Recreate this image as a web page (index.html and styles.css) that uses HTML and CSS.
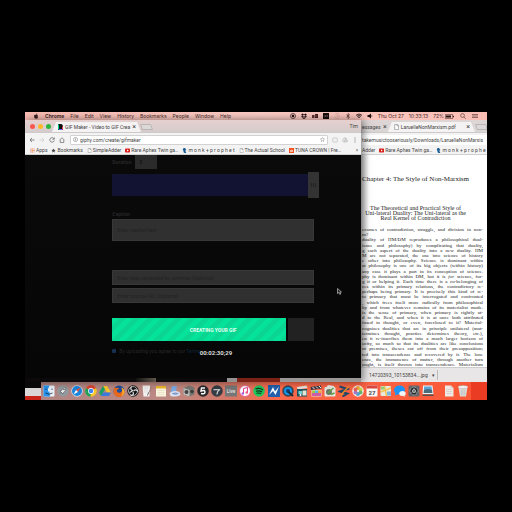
FILE: index.html
```html
<!DOCTYPE html>
<html lang="en">
<head>
<meta charset="utf-8">
<title>GIF Maker - Video to GIF Creator</title>
<link rel="stylesheet" href="styles.css">
</head>
<body>
<svg class="defs" aria-hidden="true">
  <symbol id="doc" viewBox="0 0 8 10"><path d="M1 .5h4l2.500 2.500v6.500H1z" fill="#fff" stroke="#777"/><path d="M5 .5V3h2.500" fill="none" stroke="#777"/></symbol>
  <symbol id="play" viewBox="0 0 10 10"><rect y="1" width="10" height="8" rx="1.500" fill="#d8201c"/><path d="M4 3l3.500 2L4 7z" fill="#fff"/></symbol>
  <symbol id="tumblr" viewBox="0 0 8 10"><path d="M2.500 0h2.500v2.500h2v2H5v2.500q0 1 2 .5V10q-4.500.5-4.500-2.500v-3H1v-2q1.500-.5 1.500-2.500z" fill="#1d5f94" stroke="#1d5f94"/></symbol>
  <symbol id="star" viewBox="0 0 12 12"><path d="M6 1l1.500 3.300 3.500.4-2.600 2.400.7 3.600L6 8.900l-3.100 1.800.7-3.600L1 4.700l3.500-.4z"/></symbol>
</svg>
<main class="desktop">
  <header class="menubar">
    <nav class="menus">
      <svg class="ico" viewBox="0 0 12 12"><path d="M8.300.5Q6.200 1 6.300 3 8 2.800 8.300.5M6 3.500Q2.500 2.500 2 6q0 3.500 2.500 5.500l1.500-.5 1.800.5Q9.700 10 10.300 8 7.500 6.500 9.800 4.300 8.500 2.700 6 3.500" fill="#3a2222"/></svg>
      <button type="button" class="app">Chrome</button>
      <button type="button">File</button>
      <button type="button">Edit</button>
      <button type="button">View</button>
      <button type="button">History</button>
      <button type="button">Bookmarks</button>
      <button type="button">People</button>
      <button type="button">Window</button>
      <button type="button">Help</button>
    </nav>
    <div class="status">
      <svg class="ico" viewBox="0 0 12 12"><circle cx="6" cy="6" r="5" fill="none" stroke="#3a2424" stroke-width="1.500"/><circle cx="6" cy="6" r="2.500" fill="#221111"/></svg>
      <svg class="ico" viewBox="0 0 12 12"><path d="M3 1l3 2 3-2 3 2.500-3 2 3 2L9 9.500 6 7.500l-3 2-3-2 3-2-3-2zM6 8.500l3 2-3 1.500-3-1.500z" fill="#221111"/><path d="M6 3.500l3 2-3 2-3-2z" fill="#f9c3bb"/></svg>
      <svg class="ico" viewBox="0 0 12 12"><path d="M0 4h5v6H0zM6 2h6v8H6z" fill="#4a2020"/><path d="M2 5v4M8 4v4" stroke="#c68b86"/></svg>
      <svg class="ico" viewBox="0 0 12 12"><path d="M0 0h12v12H0z" fill="#170d0d"/><path d="M2 8l3-4v4l4-4v4" stroke="#8d6664" fill="none"/></svg>
      <svg class="ico" viewBox="0 0 12 12"><path d="M2 3a5 5 0 1 1-1 4M6 3v4h2" stroke="#dda59e" stroke-width="1.500" fill="none"/></svg>
      <svg class="ico" viewBox="0 0 12 12"><path d="M3 3.500l6 5-3 2.500V1l3 2.500-6 5" stroke="#4a2c2c" stroke-width="1.300" fill="none"/></svg>
      <svg class="ico" viewBox="0 0 12 12"><path d="M0 4.500q6-5 12 0M2 6.800q4-3.500 8 0M4 9q2-2 4 0" stroke="#2c1818" stroke-width="1.800" fill="none"/></svg>
      <svg class="ico" viewBox="0 0 12 12"><path d="M1 4h3l4-3v10L4 8H1z" fill="#221111"/><path d="M9.500 4v4" stroke="#221111"/></svg>
      <time>Thu Oct 27</time>
      <time>10:33:13</time>
      <span class="battery">72%<svg viewBox="0 0 18 10"><rect x=".5" y="1.500" width="15" height="7" fill="none" stroke="#3a2222"/><path d="M2 3h10v4H2z" fill="#221111"/><path d="M17 3.500v3" stroke="#3a2222" stroke-width="2"/></svg></span>
      <svg class="ico far" viewBox="0 0 12 12"><circle cx="5" cy="5" r="3.800" fill="none" stroke="#5a3835" stroke-width="1.300"/><path d="M8 8l3.500 3.500" stroke="#5a3835" stroke-width="1.300"/></svg>
      <svg class="ico far" viewBox="0 0 12 12"><path d="M0 3h12M0 6h12M0 9h12" stroke="#5a3835" stroke-width="1.300"/></svg>
    </div>
  </header>

  <div class="stage">
    <section class="window front">
      <div class="tabstrip">
        <div class="lights"><i class="red"></i><i class="amber"></i><i class="green"></i></div>
        <div class="tab">
          <svg class="fav" viewBox="0 0 10 12"><path d="M0 0h7l3 3v9H0z" fill="#111"/><path d="M1 1v10" stroke="#00d68b" stroke-width="2"/><path d="M2 11h7" stroke="#6157ff" stroke-width="2"/><path d="M9 5v6" stroke="#e44" stroke-width="2"/></svg>
          <span class="title">GIF Maker - Video to GIF Crea</span>
          <button type="button" class="close" aria-label="Close tab">×</button>
        </div>
        <button type="button" class="newtab" aria-label="New tab"></button>
        <span class="user">Tim</span>
      </div>
      <div class="toolbar">
        <svg class="nav" viewBox="0 0 12 12"><path d="M11 6H2M6 2L2 6l4 4" fill="none" stroke="#666" stroke-width="1.500"/></svg>
        <svg class="nav" viewBox="0 0 12 12"><path d="M1 6h9M6 2l4 4-4 4" fill="none" stroke="#ccc" stroke-width="1.500"/></svg>
        <svg class="nav" viewBox="0 0 12 12"><path d="M10 3.500A4.500 4.500 0 1 0 10.500 7M10.500 1v3.500H7" fill="none" stroke="#666" stroke-width="1.500"/></svg>
        <svg class="nav" viewBox="0 0 12 12"><path d="M1 6.500L6 1.500l5 5M2.500 6v5h7V6" fill="none" stroke="#666" stroke-width="1.400"/></svg>
        <div class="omnibox">
          <svg class="info" viewBox="0 0 12 12"><circle cx="6" cy="6" r="5" fill="none" stroke="#777" stroke-width="1.300"/><path d="M6 5v4M6 2.500v1.500" stroke="#777" stroke-width="1.400"/></svg>
          <input type="text" aria-label="Address" value="giphy.com/create/gifmaker">
          <svg class="info line" viewBox="0 0 12 12"><use href="#star"/></svg>
        </div>
        <svg class="nav" viewBox="0 0 12 12"><rect x="1.500" y="2" width="9" height="8" rx="1" fill="none" stroke="#bbb" stroke-width="1.300"/></svg>
        <svg class="nav" viewBox="0 0 12 12"><path d="M4 2h4l3 6-2 2H3L1 8zM4 8h7M8 2L5 8" fill="none" stroke="#aaa" stroke-width="1.200"/></svg>
        <svg class="nav" viewBox="0 0 12 12"><path d="M6 1v2M6 5v2M6 9v2" stroke="#777" stroke-width="2"/></svg>
      </div>
      <nav class="bookmarks">
        <a href="#"><svg viewBox="0 0 10 10"><path d="M1 1h2v2H1zM1 7h2v2H1zM7 4h2v2H7z" fill="#e2574a"/><path d="M4 1h2v2H4zM4 4h2v2H4zM7 7h2v2H7z" fill="#f2a53c"/><path d="M7 1h2v2H7zM1 4h2v2H1zM4 7h2v2H4z" fill="#e9766a"/></svg>Apps</a>
        <a href="#"><svg class="solid" viewBox="0 0 12 12"><use href="#star"/></svg>Bookmarks</a>
        <a href="#"><svg viewBox="0 0 8 10"><use href="#doc"/></svg>SimpleAdder</a>
        <a href="#"><svg viewBox="0 0 10 10"><use href="#play"/></svg>Rare Aphex Twin ga…</a>
        <a href="#"><svg viewBox="0 0 8 10"><use href="#tumblr"/></svg>m o n k + p r o p h e t</a>
        <a href="#"><svg viewBox="0 0 8 10"><use href="#doc"/></svg>The Actual School</a>
        <a href="#"><svg viewBox="0 0 10 10"><path d="M0 0h10v10H0z" fill="#f4511e"/><path d="M2 6h6M3 4v4M5 3v5M7 4v4" stroke="#fff"/></svg>TUNA CROWN | Fre…</a>
        <span class="more">»</span>
      </nav>
      <form class="maker">
        <div class="row duration"><label for="dur">Duration</label><input id="dur" type="text" value="2"></div>
        <div class="track"><span class="grip"></span></div>
        <label class="cap" for="caption">Caption</label>
        <input id="caption" class="field tall" type="text" placeholder="Enter caption text">
        <input class="field" type="text" aria-label="Tags" placeholder="Enter tags separated by commas (Optional)">
        <input class="field" type="text" aria-label="Source" placeholder="Enter source URL (Optional)">
        <button type="button" class="create">CREATING YOUR GIF</button>
        <div class="row agree"><input id="ok" type="checkbox" checked><label for="ok">By uploading you agree to our <a href="#">Terms</a></label></div>
        <output class="timecode">00:02:30;29</output>
      </form>
      <svg class="cursor" viewBox="0 0 10 14"><path d="M1 1v10l2.500-2 2 4 2-1-2-4H9z" fill="#222" stroke="#ccc" stroke-width="1.300"/></svg>
      <div class="peek"><i class="photo"></i><i class="gray"></i><i class="rust"></i><i class="pale"></i></div>
    </section>

    <section class="window back">
      <div class="tabstrip">
        <span class="oldtab">essages</span>
        <button type="button" class="close" aria-label="Close tab">×</button>
        <div class="tab">
          <svg class="fav" viewBox="0 0 8 10"><use href="#doc"/></svg>
          <span class="title">LaruelleNonMarxism.pdf</span>
          <button type="button" class="close" aria-label="Close tab">×</button>
        </div>
        <button type="button" class="newtab" aria-label="New tab"></button>
      </div>
      <div class="toolbar"><input type="text" aria-label="Address" value="takemusictooseriously/Downloads/LaruelleNonMarxis"></div>
      <nav class="bookmarks">
        <a href="#">Adder</a>
        <a href="#"><svg viewBox="0 0 10 10"><use href="#play"/></svg>Rare Aphex Twin ga…</a>
        <a href="#"><svg viewBox="0 0 8 10"><use href="#tumblr"/></svg>m o n k + p r o p h e</a>
      </nav>
      <article class="paper">
        <h1>Chapter 4: The Style of Non-Marxism</h1>
        <h2>The Theoretical and Practical Style of<br>Uni-lateral Duality: The Uni-lateral as the<br>Real Kernel of Contradiction</h2>
        <div class="lines">
          <p>ecomes of contradiction, struggle, and division in non-</p>
          <p class="end">m?</p>
          <p>duality of HM/DM reproduces a philosophical dual-</p>
          <p>ience and philosophy) by complicating that duality,</p>
          <p>g each aspect of the duality into a new duality. HM</p>
          <p>M are not separated, the one into science of history</p>
          <p>e other into philosophy. Science is dominant within</p>
          <p>at philosophy is one of its big objects (within history)</p>
          <p>any case it plays a part in its conception of science.</p>
          <p>phy is dominant within DM, but it is <em>for</em> science, fur-</p>
          <p>g it or helping it. Each time there is a co-belonging of</p>
          <p>ces within its primary relations, the contradictory re-</p>
          <p>perhaps being primary. It is precisely this kind of re-</p>
          <p>to primacy that must be interrogated and confronted</p>
          <p>, which frees itself more radically from philosophical</p>
          <p>hy and from whatever remains of its materialist mode.</p>
          <p>is the sense of primacy, when primacy is rightly at-</p>
          <p>d to the Real, and when it is at once both attributed</p>
          <p>fused to thought, or even, foreclosed to it? Material-</p>
          <p>cognizes dualities that are in principle unilateral (mat-</p>
          <p>termines thought, practice determines theory, etc.),</p>
          <p>en it re-inscribes them into a much larger horizon of</p>
          <p>ocity, so much so that its dualities are like conclusions</p>
          <p>ut premises, theses cut off from their presupposition;</p>
          <p>ted into transcendence and recovered by it. The lone</p>
          <p>ence, the immanence of matter, through another turn</p>
          <p>ought, is itself thrown into transcendence. Materialism</p>
        </div>
      </article>
      <footer class="downloads"><button type="button">14720393_10153834….jpg<i>▾</i></button></footer>
    </section>
  </div>

  <footer class="shelf">
    <nav class="dock">
      <svg viewBox="0 0 24 24"><rect x="1" y="1" width="22" height="22" rx="2" fill="#e9f0f8"/><path d="M1 1h12q-4 7-3 12h3q0 6 1 10H1z" fill="#2794ee"/><path d="M6 7v3M18 7v3M5 16q7 5 14 0" stroke="#123" stroke-width="1.500" fill="none"/></svg>
      <svg viewBox="0 0 24 24"><circle cx="12" cy="12" r="11.500" fill="#939a9f"/><path d="M18 5q-6 0-9 6l-3 1 6 6 1-3q5-3 5-10M6 17l3-3" fill="#e8ebec" stroke="#444"/><circle cx="14" cy="9" r="1.500" fill="#555"/></svg>
      <svg viewBox="0 0 24 24"><circle cx="12" cy="12" r="11.500" fill="#d5e3ef"/><circle cx="12" cy="12" r="10" fill="#1b85dc"/><path d="M19 5l-5 9-4-4z" fill="#f04b3a"/><path d="M5 19l5-9 4 4z" fill="#fff"/></svg>
      <svg viewBox="0 0 24 24"><circle cx="12" cy="12" r="11.500" fill="#f6c727"/><path d="M12 12L2 6a11.500 11.500 0 0 1 20 0z" fill="#dc4437"/><path d="M12 12L2 6a11.500 11.500 0 0 0 9 17.500z" fill="#1fa15b"/><circle cx="12" cy="12" r="5.800" fill="#fff"/><circle cx="12" cy="12" r="4.500" fill="#4285f4"/></svg>
      <svg viewBox="0 0 24 24"><path d="M8 2h8l8 13h-8z" fill="#f9c52c"/><path d="M8 2l4 7-8 13-4-7z" fill="#1da362"/><path d="M8 15h16l-4 7H4z" fill="#3d78dc"/></svg>
      <svg viewBox="0 0 24 24"><circle cx="12" cy="12" r="11" fill="#1d4f9e"/><path d="M3 4q2 2 4 2 4-2 5 2-6 1-4 5 2 4 7 2 5-3 2-10 7 4 6 10-2 9-11 9T1 14Q1 7 3 4" fill="#e8691c"/><path d="M17 5q6 3 6 9-1 6-7 8 5-5 1-17" fill="#f8b02d"/></svg>
      <svg viewBox="0 0 24 24"><circle cx="12" cy="12" r="11.500" fill="#151518"/><circle cx="12" cy="12" r="9" fill="none" stroke="#ddd" stroke-width="1.500"/><path d="M12 11Q5 10 9 3M13 12q5-5 9 1M12 14q3 7-5 7M11 12l-6 3" fill="none" stroke="#ddd" stroke-width="2.500"/></svg>
      <svg viewBox="0 0 24 24"><path d="M3 1h15l-1 22H5z" fill="#f3f2f0"/><path d="M6 6h8M6 10h8M6 14h7" stroke="#ccc"/><path d="M22 3l-8 17-2 2 1-4z" fill="#555"/></svg>
      <svg viewBox="0 0 24 24"><rect x="2" y="2" width="20" height="21" rx="1" fill="#fbf6df"/><path d="M2 2h20v5H2z" fill="#efb92f"/><path d="M5 11h14M5 15h14M5 19h14" stroke="#ddd4b8"/></svg>
      <svg viewBox="0 0 24 24"><path d="M7 1l9 2-3 13-10-3z" fill="#7caae3"/><path d="M1 16q9-7 20-2l2 6q-10 5-20 2z" fill="#dbe3ef"/><path d="M5 17q8-4 15 0-7 5-15 0" fill="#819bd0"/></svg>
      <svg viewBox="0 0 24 24"><path d="M1 6l11-5 11 4v14l-10 4-12-4z" fill="#777873"/><path d="M1 6l12 4v13L1 19z" fill="#bcbdb8"/><circle cx="7" cy="14" r="4" fill="#444"/><circle cx="18" cy="13" r="3.500" fill="#3d3d3b"/></svg>
      <svg viewBox="0 0 24 24"><circle cx="12" cy="12" r="11.500" fill="#29282a"/><path d="M16 6H9l-1 6q8-3 8 2 0 5-8 3" fill="none" stroke="#fff" stroke-width="2.800"/></svg>
      <svg viewBox="0 0 24 24"><circle cx="12" cy="12" r="11.500" fill="#353c43"/><path d="M5 9h13q-6 3-6 10" fill="none" stroke="#c3c8cd" stroke-width="2.500"/></svg>
      <svg viewBox="0 0 24 24"><path d="M0 1h24v22H0z" fill="#777"/><text x="12" y="15" class="live">Live</text></svg>
      <svg viewBox="0 0 24 24"><circle cx="12" cy="12" r="11.500" fill="#ed6eb2"/><circle cx="12" cy="12" r="10" fill="#fff"/><path d="M9 17V7l8-2v10" fill="none" stroke="#e9438d" stroke-width="2"/><circle cx="7.500" cy="17" r="2.500" fill="#a25be4"/><circle cx="15.500" cy="15" r="2.500" fill="#ef5180"/></svg>
      <svg viewBox="0 0 24 24"><circle cx="12" cy="12" r="11.500" fill="#1fc75c"/><path d="M5 8q8-3 15 2M6 12.500q7-2 12 1.500M7 16.500q6-1.500 9 1" fill="none" stroke="#14331f" stroke-width="2.300"/></svg>
      <svg viewBox="0 0 24 24"><path d="M0 0h24v24H0z" fill="#225fac"/><path d="M2 20L10 4l4 9 8-10-7 17-5-8z" fill="#fff"/></svg>
      <svg viewBox="0 0 24 24"><circle cx="12" cy="12" r="11.500" fill="#3b4654"/><circle cx="12" cy="12" r="8" fill="#1497e8"/><circle cx="12" cy="12" r="4" fill="#123f75"/><path d="M13 14l9 8" stroke="#1b2939" stroke-width="4"/></svg>
      <svg viewBox="0 0 24 24"><path d="M2 4l19-3 2 5L3 9z" fill="#e7e5dd"/><path d="M2 8h20v15H2z" fill="#24505b"/><path d="M5 12h7v6H5z" fill="#72d5d4"/><path d="M13 11h8v10h-8z" fill="#e4e6d4"/><circle cx="9" cy="20" r="2" fill="#fff"/></svg>
      <svg viewBox="0 0 24 24"><path d="M1 4l21-3 1 6-21 3z" fill="#3b3a42"/><path d="M5 4l4 4M12 3l4 4M18 2l4 4" stroke="#fff" stroke-width="2"/><path d="M3 10h20v13H3z" fill="#e8e0d7"/><path d="M4 11h6v5H4z" fill="#a4cb41"/><path d="M10 11h6v5h-6z" fill="#4fb8e2"/><path d="M16 11h6v5h-6z" fill="#f2a33b"/><path d="M4 16h18v6H4z" fill="#cf5ca6"/></svg>
      <svg viewBox="0 0 24 24"><rect x="1" y="4" width="22" height="19" rx="2" fill="#e5e6dd"/><path d="M5 4l3-4 12 2v3z" fill="#eee"/><circle cx="10" cy="14" r="6" fill="#677567"/><path d="M8 16l11-10M14 19l7-3" stroke="#66a24b" stroke-width="3"/></svg>
      <svg viewBox="0 0 24 24"><path d="M3 3l16 5-15 5 15 4-10 6" fill="none" stroke="#20486b" stroke-width="4"/><path d="M22 2L5 21" stroke="#ea8b22" stroke-width="3"/></svg>
      <svg viewBox="0 0 24 24"><circle cx="12" cy="12" r="11.500" fill="#f5f3f0"/><circle cx="12" cy="6" r="4" fill="#f59f33"/><circle cx="17" cy="9" r="4" fill="#c8d24a"/><circle cx="17" cy="15" r="4" fill="#67b46b"/><circle cx="12" cy="18" r="4" fill="#4fa0d0"/><circle cx="7" cy="15" r="4" fill="#a27bc4"/><circle cx="7" cy="9" r="4" fill="#e8615a"/></svg>
      <svg viewBox="0 0 24 24"><rect x="1" y="1" width="22" height="22" rx="2" fill="#fbf8f6"/><path d="M1 1h22v6H1z" fill="#d8463d"/><text x="12" y="19" class="day">27</text></svg>
      <svg viewBox="0 0 24 24"><rect x="1" y="2" width="21" height="20" rx="2" fill="#e9e8da"/><path d="M1 14L22 6M9 2l4 20" stroke="#f2c44f" stroke-width="3"/><path d="M2 3h7v6H2z" fill="#94ca71"/><path d="M14 13h8v8h-8z" fill="#7ab6e0"/></svg>
      <svg viewBox="0 0 24 24"><ellipse cx="11" cy="10" rx="11" ry="9" fill="#1b95f3"/><path d="M3 15l-1 6 7-3z" fill="#1b95f3"/><ellipse cx="17" cy="17" rx="6.500" ry="5" fill="#f3f5f7"/><path d="M20 20l3 3-6-1z" fill="#f3f5f7"/></svg>
      <svg viewBox="0 0 24 24"><rect x="1" y="1" width="22" height="22" rx="3" fill="#60666a"/><circle cx="12" cy="12" r="8" fill="#2b2f32" stroke="#b8bdc0" stroke-width="2" stroke-dasharray="2 1"/><circle cx="12" cy="12" r="3" fill="none" stroke="#b8bdc0" stroke-width="2"/><path d="M12 12V5M12 12l6 4M12 12l-6 4" stroke="#b8bdc0"/></svg>
      <svg viewBox="0 0 24 24"><path d="M2 1h19l2 17H1z" fill="#eef1f3"/><path d="M4 3h15l1 7H4z" fill="#5ba5d8"/><path d="M4 10q8-4 16 0l1 6H3z" fill="#496d7c"/><path d="M1 19h22v3H1z" fill="#555"/></svg>
      <svg class="pile" viewBox="0 0 24 24"><path d="M4 1h12l5 5v17H4z" fill="#eee9e5"/><path d="M16 1v5h5M7 9h10M7 13h10M7 17h10" fill="none" stroke="#c2b8b2"/></svg>
      <svg viewBox="0 0 24 24"><path d="M3 4h18l-3 19H6z" fill="#dcdcda"/><ellipse cx="12" cy="4" rx="9.500" ry="3" fill="#f7f5f2" stroke="#aaa"/><path d="M8 9l1 12M12 9v12M16 9l-1 12" stroke="#aaa"/></svg>
    </nav>
  </footer>
</main>
</body>
</html>
```
FILE: styles.css
```css
* { box-sizing: border-box; }

body {
  margin: 0;
  padding: 112px 25px;
  background: #000;
  font: 5px/8px Roboto, "Liberation Sans", sans-serif;
  color: #444;
}

.defs { position: absolute; width: 0; height: 0; }
svg { flex: none; display: block; }
a { color: inherit; text-decoration: none; }

button, input {
  font: inherit;
  color: inherit;
  border: 0;
  padding: 0;
  margin: 0;
  background: none;
  border-radius: 0;
}

.desktop {
  display: grid;
  grid-template-rows: 8px 262px 18px;
  overflow: hidden;
  background: #0a0a0a;
}

/* Menu bar */
.menubar {
  display: flex;
  justify-content: space-between;
  background: linear-gradient(90deg, #f9bcb3, #fbccc5 50%, #f9bdb4);
  padding: 0 9px 0 8px;
  font-family: Inter, sans-serif;
  color: #4a2e2c;
}
.menus, .status { display: flex; align-items: center; }
.menus { gap: 6px; }
.menus .app { font-weight: 700; }
.status { gap: 5px; }
.ico { width: 6px; height: 6px; }
.ico.far { margin-left: 1px; }
.battery { display: flex; align-items: center; gap: 1px; }
.battery svg { width: 9px; height: 5px; }

/* Windows */
.stage { display: grid; grid-template-columns: 8fr 3fr; min-height: 0; }
.window { min-width: 0; display: flex; flex-direction: column; }
.front { position: relative; z-index: 1; }
.back { overflow: hidden; background: #fff; }

.tabstrip {
  display: flex;
  align-items: flex-end;
  height: 13px;
  background: linear-gradient(#e6d0cf, #d5cccc);
  border-bottom: 1px solid #cfcaca;
}
.lights { display: flex; gap: 3px; padding: 0 1px 0 5px; align-self: center; }
.lights i { width: 5px; height: 5px; border-radius: 50%; }
.red { background: #fa5650; }
.amber { background: #fcb827; }
.green { background: #2bb53c; }
.tab {
  display: flex;
  align-items: center;
  gap: 2px;
  height: 10px;
  padding: 0 5px 0 6px;
  background: #f4f2f2;
  clip-path: polygon(4px 0, calc(100% - 4px) 0, 100% 100%, 0 100%);
}
.front .tab { min-width: 87px; }
.fav { width: 5px; height: 6px; }
.title { flex: 1; white-space: nowrap; }
.close { font-size: 7px; line-height: 8px; }
.newtab {
  width: 11px;
  height: 6px;
  margin-bottom: 2px;
  background: #dcd8d8;
  border: 1px solid #bbb5b5;
  border-radius: 1px;
  transform: skewX(20deg);
}
.user { margin: 0 3px 0 auto; align-self: center; }

.toolbar {
  display: flex;
  align-items: center;
  gap: 4px;
  height: 13px;
  padding: 0 3px 0 4px;
  background: #f4f3f3;
}
.nav { width: 6px; height: 6px; }
.omnibox {
  flex: 1;
  display: flex;
  align-items: center;
  gap: 2px;
  height: 10px;
  margin-left: 1px;
  padding: 0 2px;
  background: #fff;
  border: 1px solid #d2d2d2;
  border-radius: 1px;
}
.omnibox input { flex: 1; min-width: 0; }
.info { width: 5px; height: 5px; }
.line { fill: none; stroke: #777; }
.solid { fill: #444; }

.bookmarks {
  display: flex;
  align-items: center;
  gap: 4px;
  height: 9px;
  padding: 0 3px 0 5px;
  background: #f4f3f3;
  border-bottom: 1px solid #d0d0d0;
  white-space: nowrap;
}
.bookmarks a { display: flex; align-items: center; gap: 1px; }
.bookmarks svg { width: 5px; height: 5px; }
.more { margin-left: auto; }

/* GIF form */
.front { box-shadow: 2px 0 8px rgba(0, 0, 0, .5); }
.maker {
  position: relative;
  flex: 1;
  display: flex;
  flex-direction: column;
  padding: 0 14% 0 26%;
  background: linear-gradient(#0a0a0a, #060606);
  color: #262626;
}
.row { display: flex; align-items: center; }
.duration { gap: 4px; height: 14px; font-weight: 700; }
.duration input { width: 22px; height: 14px; padding-left: 4px; background: #2b2b2b; color: #111; }
.track {
  display: flex;
  justify-content: flex-end;
  align-items: center;
  height: 22px;
  margin: 5px -5px 0 0;
  background: #121232;
}
.grip {
  width: 11px;
  height: 26px;
  background:
    repeating-linear-gradient(90deg, #222 0 1px, #333 1px 2px) center / 5px 4px no-repeat,
    #333;
}
.cap { margin: 14px 0 1px; font-weight: 700; }
.field {
  height: 15px;
  margin-bottom: 3px;
  padding: 0 4px;
  background: #303030;
  border: 1px solid #383838;
  color: #222;
}
.field::placeholder { color: #222; opacity: 1; }
.tall { height: 22px; margin: 0 0 29px; }
.create {
  height: 23px;
  margin-top: 12px;
  background:
    linear-gradient(90deg, transparent 86%, #060606 86% 87%, #222 87%),
    repeating-linear-gradient(135deg, #05e39a 0 5px, #0ad691 5px 10px);
  font-family: Roboto, sans-serif;
  font-weight: 700;
  color: #e2fff3;
}
.agree { gap: 3px; height: 8px; margin-top: 6px; }
.agree input { appearance: none; width: 4px; height: 4px; border-radius: 1px; background: #17304f; }
.agree a { color: #10263a; }
.timecode {
  position: absolute;
  left: 52%;
  top: 194px;
  font-weight: 700;
  font-size: 6px;
  color: #ddd;
}
.cursor { position: absolute; left: 93%; top: 168px; width: 5px; height: 7px; }
.peek { display: flex; height: 4px; background: #0b0909; }
.photo { width: 6%; margin-left: 33%; background: linear-gradient(90deg, #111, #62584c); }
.gray { width: 3%; margin-left: 21%; background: #949191; }
.rust { width: 13%; background: #7c2115; }
.pale { flex: 1; background: #9b9797; }

/* PDF window */
.back .tabstrip { gap: 1px; background: linear-gradient(#dfd5d5, #d9d5d5); padding-left: 1px; }
.oldtab { width: 20px; line-height: 10px; }
.back .close { line-height: 10px; }
.back .tab { flex: 1; padding: 0 5px 0 6px; }
.back .toolbar { padding: 0 0 0 1px; }
.back .toolbar input { flex: 1; min-width: 0; height: 10px; background: #fff; }
.back .bookmarks { padding: 0 0 0 1px; overflow: hidden; }
.paper {
  flex: 1;
  min-height: 0;
  display: flex;
  flex-direction: column;
  padding: 0 4px 0 1px;
  overflow: hidden;
  font-family: "Liberation Serif", serif;
  color: #222;
  background: linear-gradient(90deg, #ccc, #fff 8px);
}
h1, h2, p { margin: 0; font-weight: 400; }
h1, h2 { padding-right: 14px; text-align: center; white-space: nowrap; }
h1 { margin-top: 20px; font-size: 7px; line-height: 8px; }
h2 { margin-top: 23px; font-size: 6px; line-height: 5px; }
.lines { flex: 1; display: flex; flex-direction: column; justify-content: space-between; margin-top: 6px; }
.lines p { line-height: 5px; white-space: nowrap; text-align-last: justify; }
.lines .end { text-align-last: left; }
.downloads {
  display: flex;
  align-items: center;
  height: 15px;
  padding-left: 8px;
  background: #e8e6e6;
  border-top: 1px solid #ccc;
}
.downloads button { height: 10px; padding-right: 2px; border-right: 1px solid #bbb; }
.downloads i { margin-left: 4px; font-style: normal; }

/* Dock */
.shelf {
  padding: 0 16px;
  background:
    linear-gradient(#0a0a0a 6px, #ddd8d8 6px 14px, #c92518 14px) left / 16px 100% no-repeat,
    #ea3c22;
}
.dock {
  display: flex;
  align-items: center;
  justify-content: space-between;
  height: 100%;
  padding: 0 2px;
  background: linear-gradient(90deg, #b08583, #bd8983 30%, #d17a6b 42%, #f9694b 55%, #fa5836);
}
.dock svg { width: 12px; height: 12px; }
.dock .pile { margin-left: 7px; }
.live { font: 700 9px Roboto, sans-serif; fill: #ddd; text-anchor: middle; }
.day { font: 700 12px Roboto, sans-serif; fill: #444; text-anchor: middle; }
```
